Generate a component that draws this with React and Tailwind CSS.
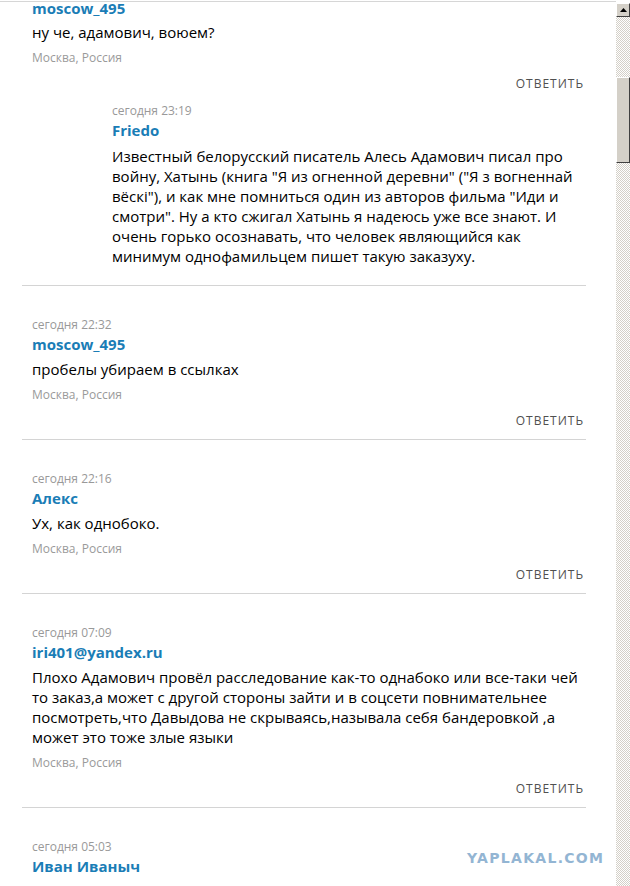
import React from "react";

const Date_ = ({ children }) => (
  <div className="h-[20px] leading-[20px] text-[12px] text-[#999999]">{children}</div>
);
const Name = ({ children }) => (
  <div className="h-[18px] leading-[18px] text-[15px] font-bold text-[#1a7db6]">{children}</div>
);
const Body = ({ lines, className = "" }) => (
  <div className={"text-[15px] leading-[20px] text-[#000000] " + className}>
    {lines.map((l, i) => (
      <div key={i} className="whitespace-nowrap">{l}</div>
    ))}
  </div>
);
const Loc = () => (
  <div className="mt-[6px] h-[20px] leading-[20px] text-[12px] text-[#9a9a9a]">Москва, Россия</div>
);
const Reply = () => (
  <div className="mt-[6px] h-[20px] leading-[20px] text-right text-[12px] tracking-[1px] text-[#505050]">
    ОТВЕТИТЬ
  </div>
);

const Comment = ({ date, name, lines }) => (
  <div className="border-b border-[#d4d4d4] pl-[10px] pr-[2px] pt-[29px] pb-[8px]">
    <Date_>{date}</Date_>
    <Name>{name}</Name>
    <Body lines={lines} className="mt-[6px]" />
    <Loc />
    <Reply />
  </div>
);

export default function App() {
  return (
    <div
      className="relative w-[630px] h-[886px] overflow-hidden bg-white flex"
      style={{ fontFamily: '"Open Sans", "Noto Sans", sans-serif' }}
    >
      <div className="w-[616px] mt-[1px] border-t border-[#d6d6d6]">
        <div className="ml-[22px] w-[564px]">
          {/* first (partial) comment */}
          <div className="border-b border-[#d4d4d4] pl-[10px] pr-[2px] pb-[18px]">
            <div className="-mt-[3px]">
              <Name>moscow_495</Name>
            </div>
            <Body lines={["ну че, адамович, воюем?"]} className="mt-[5px]" />
            <Loc />
            <Reply />
            <div className="mt-[7px] ml-[80px]">
              <Date_>сегодня 23:19</Date_>
              <Name>Friedo</Name>
              <Body
                className="mt-[7px]"
                lines={[
                  "Известный белорусский писатель Алесь Адамович писал про",
                  'войну, Хатынь (книга "Я из огненной деревни" ("Я з вогненнай',
                  'вёскі"), и как мне помниться один из авторов фильма "Иди и',
                  'смотри". Ну а кто сжигал Хатынь я надеюсь уже все знают. И',
                  "очень горько осознавать, что человек являющийся как",
                  "минимум однофамильцем пишет такую заказуху.",
                ]}
              />
              <div className="h-[1px]" />
            </div>
          </div>
          <Comment date="сегодня 22:32" name="moscow_495" lines={["пробелы убираем в ссылках"]} />
          <Comment date="сегодня 22:16" name="Алекс" lines={["Ух, как однобоко."]} />
          <Comment
            date="сегодня 07:09"
            name="iri401@yandex.ru"
            lines={[
              "Плохо Адамович провёл расследование как-то однабоко или все-таки чей",
              "то заказ,а может с другой стороны зайти и в соцсети повнимательнее",
              "посмотреть,что Давыдова не скрываясь,называла себя бандеровкой ,а",
              "может это тоже злые языки",
            ]}
          />
          <div className="pl-[10px] pr-[2px] pt-[29px]">
            <Date_>сегодня 05:03</Date_>
            <Name>Иван Иваныч</Name>
            <Body
              className="mt-[6px]"
              lines={['Молодец, что написал. Посмотрим на "НТВ". Может быть, обойдётся без этого.']}
            />
          </div>
        </div>
      </div>

      {/* scrollbar */}
      <div className="w-[14px] pt-[3px] flex flex-col">
        <div className="h-[14px] bg-[#d4d0c8] border-t border-l border-white border-r border-b border-r-[#404040] border-b-[#404040] flex items-center justify-center">
          <svg width="7" height="4" viewBox="0 0 7 4">
            <path d="M3.5 0 L7 4 L0 4 Z" fill="#000" />
          </svg>
        </div>
        <div className="flex-1 bg-[repeating-conic-gradient(#d4d0c8_0%_25%,#ffffff_0%_50%)] bg-[length:2px_2px] pt-[60px]">
          <div className="h-[86px] bg-[#d4d0c8] border-t border-l border-white border-r border-b border-r-[#404040] border-b-[#404040]" />
        </div>
      </div>

      {/* watermark */}
      <div
        className="absolute left-[467px] top-[848px] text-[14px] font-black tracking-[1.3px] text-[#93b5d3]"
        style={{ fontFamily: '"DejaVu Sans", sans-serif' }}
      >
        YAPLAKAL.COM
      </div>
    </div>
  );
}
